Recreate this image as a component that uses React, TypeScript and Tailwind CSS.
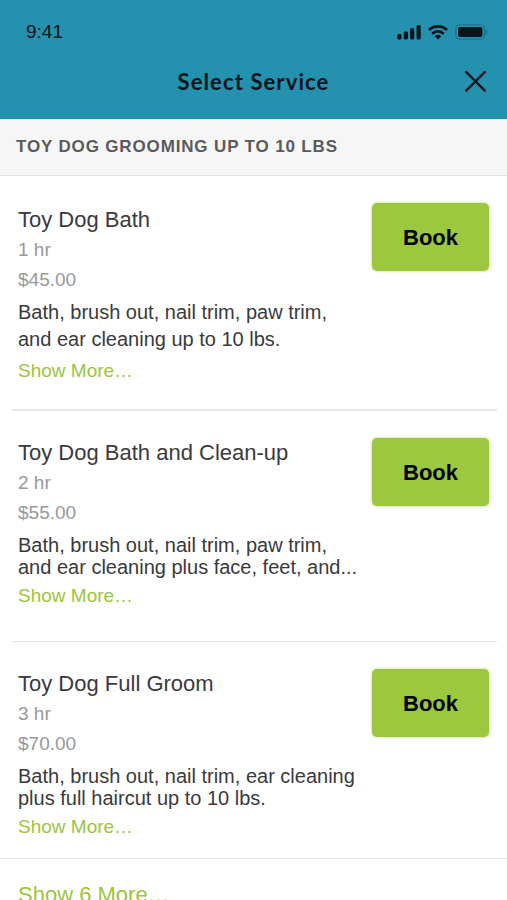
import { useState } from 'react'

type Service = {
  id: number
  name: string
  duration: string
  price: string
  description: string[]
  textClass: string
  descriptionClass: string
  rowClass: string
}

const services: Service[] = [
  {
    id: 1,
    name: 'Toy Dog Bath',
    duration: '1 hr',
    price: '$45.00',
    description: ['Bath, brush out, nail trim, paw trim,', 'and ear cleaning up to 10 lbs.'],
    textClass: 'pt-0.5',
    descriptionClass: 'mt-1 leading-[27px]',
    rowClass: 'ml-3 mr-[10px] pb-6 border-b-2',
  },
  {
    id: 2,
    name: 'Toy Dog Bath and Clean-up',
    duration: '2 hr',
    price: '$55.00',
    description: ['Bath, brush out, nail trim, paw trim,', 'and ear cleaning plus face, feet, and...'],
    textClass: 'pt-0',
    descriptionClass: 'mt-1.5 leading-[22px]',
    rowClass: 'ml-3 mr-[10px] pb-[31px] border-b',
  },
  {
    id: 3,
    name: 'Toy Dog Full Groom',
    duration: '3 hr',
    price: '$70.00',
    description: ['Bath, brush out, nail trim, ear cleaning', 'plus full haircut up to 10 lbs.'],
    textClass: 'pt-0',
    descriptionClass: 'mt-1.5 leading-[22px]',
    rowClass: 'pl-3 pr-[10px] pb-[17px] border-b',
  },
]

const StatusBar = () => (
  <div className="flex items-center justify-between pt-4 pl-[26px] pr-[18px]">
    <span className="text-[19px] leading-8">9:41</span>
    <div className="flex items-center gap-[7px]">
      <svg width="24" height="16" viewBox="0 0 24 16" fill="currentColor" aria-hidden="true">
        <rect x="0.3" y="10" width="4.2" height="5.5" rx="1.4" />
        <rect x="6.7" y="7.6" width="4.2" height="7.9" rx="1.4" />
        <rect x="13.1" y="4.3" width="4.2" height="11.2" rx="1.4" />
        <rect x="19.5" y="1" width="4.2" height="14.5" rx="1.4" />
      </svg>
      <svg width="20" height="16" viewBox="0 0 20 16" fill="none" stroke="currentColor" aria-hidden="true">
        <path d="M1 6a13 13 0 0 1 18 0" strokeWidth="2.8" />
        <path d="M4.2 9.8a8.2 8.2 0 0 1 11.6 0" strokeWidth="2.6" />
        <path d="M10 15.4l-3.2-3.1a4.7 4.7 0 0 1 6.4 0z" fill="currentColor" stroke="none" />
      </svg>
      <svg width="34" height="16" viewBox="0 0 34 16" aria-hidden="true">
        <rect x="0.8" y="0.8" width="28.6" height="14.4" rx="3.8" fill="none" stroke="#1b7590" strokeWidth="1.2" />
        <rect x="3" y="3" width="24.4" height="10" rx="2" fill="currentColor" />
        <path d="M30.5 5.2a3 3 0 0 1 0 5.6z" fill="#1b7590" />
      </svg>
    </div>
  </div>
)

const ServiceRow = ({ service }: { service: Service }) => {
  const [expanded, setExpanded] = useState(false)

  return (
    <li className={`flex items-start justify-between border-[#e6e6e6] pt-[27px] ${service.rowClass}`}>
      <div className={`pl-1.5 ${service.textClass}`}>
        <h3 className="text-[22px] leading-[30px] text-[#3a3a3c]">{service.name}</h3>
        <p className="text-[19px] leading-[30px] text-[#98989a]">{service.duration}</p>
        <p className="text-[19px] leading-[30px] text-[#98989a]">{service.price}</p>
        <p className={`text-[20px] text-[#3a3a3c] whitespace-nowrap ${service.descriptionClass}`}>
          {service.description[0]}
          <br />
          {service.description[1]}
        </p>
        <button
          className="block mt-1 text-[19px] leading-7 text-[#9bc53d] cursor-pointer"
          aria-expanded={expanded}
          onClick={() => setExpanded(!expanded)}
        >
          Show More…
        </button>
      </div>
      <button className="shrink-0 w-[117px] h-[68px] mr-2 text-[22px] font-bold text-black bg-[#9bc83f] rounded-[5px] shadow-[0_0_3px_#b5d870] cursor-pointer">
        Book
      </button>
    </li>
  )
}

const App = () => {
  return (
    <div className="min-h-screen overflow-hidden bg-white font-['Liberation_Sans',Arial,sans-serif]">
      <header className="pb-[19px] text-[#06141c] bg-[#2492ae]">
        <StatusBar />
        <div className="grid grid-cols-[1fr_auto_1fr] items-center pt-4 pr-5">
          <h1 className="col-start-2 pl-5 text-[22px] leading-9 font-bold tracking-wider font-['Lato',sans-serif]">
            Select Service
          </h1>
          <button className="justify-self-end cursor-pointer" aria-label="Close">
            <svg width="24" height="24" viewBox="0 0 24 24" fill="none" stroke="currentColor" strokeWidth="2.4" strokeLinecap="round">
              <path d="M3.2 2l18.6 18.6M21.8 2l-18.6 18.6" />
            </svg>
          </button>
        </div>
      </header>
      <main>
        <h2 className="px-4 text-[17px] leading-[56px] font-bold tracking-wider uppercase text-[#5a5a5c] bg-[#f6f6f6] border-b border-[#e2e2e2]">
          Toy Dog Grooming up to 10 lbs
        </h2>
        <ul>
          {services.map(service => (
            <ServiceRow key={service.id} service={service} />
          ))}
        </ul>
        <button className="block px-[18px] pt-5 text-[22px] leading-8 text-[#9bc53d] cursor-pointer">Show 6 More…</button>
      </main>
    </div>
  )
}

export default App
